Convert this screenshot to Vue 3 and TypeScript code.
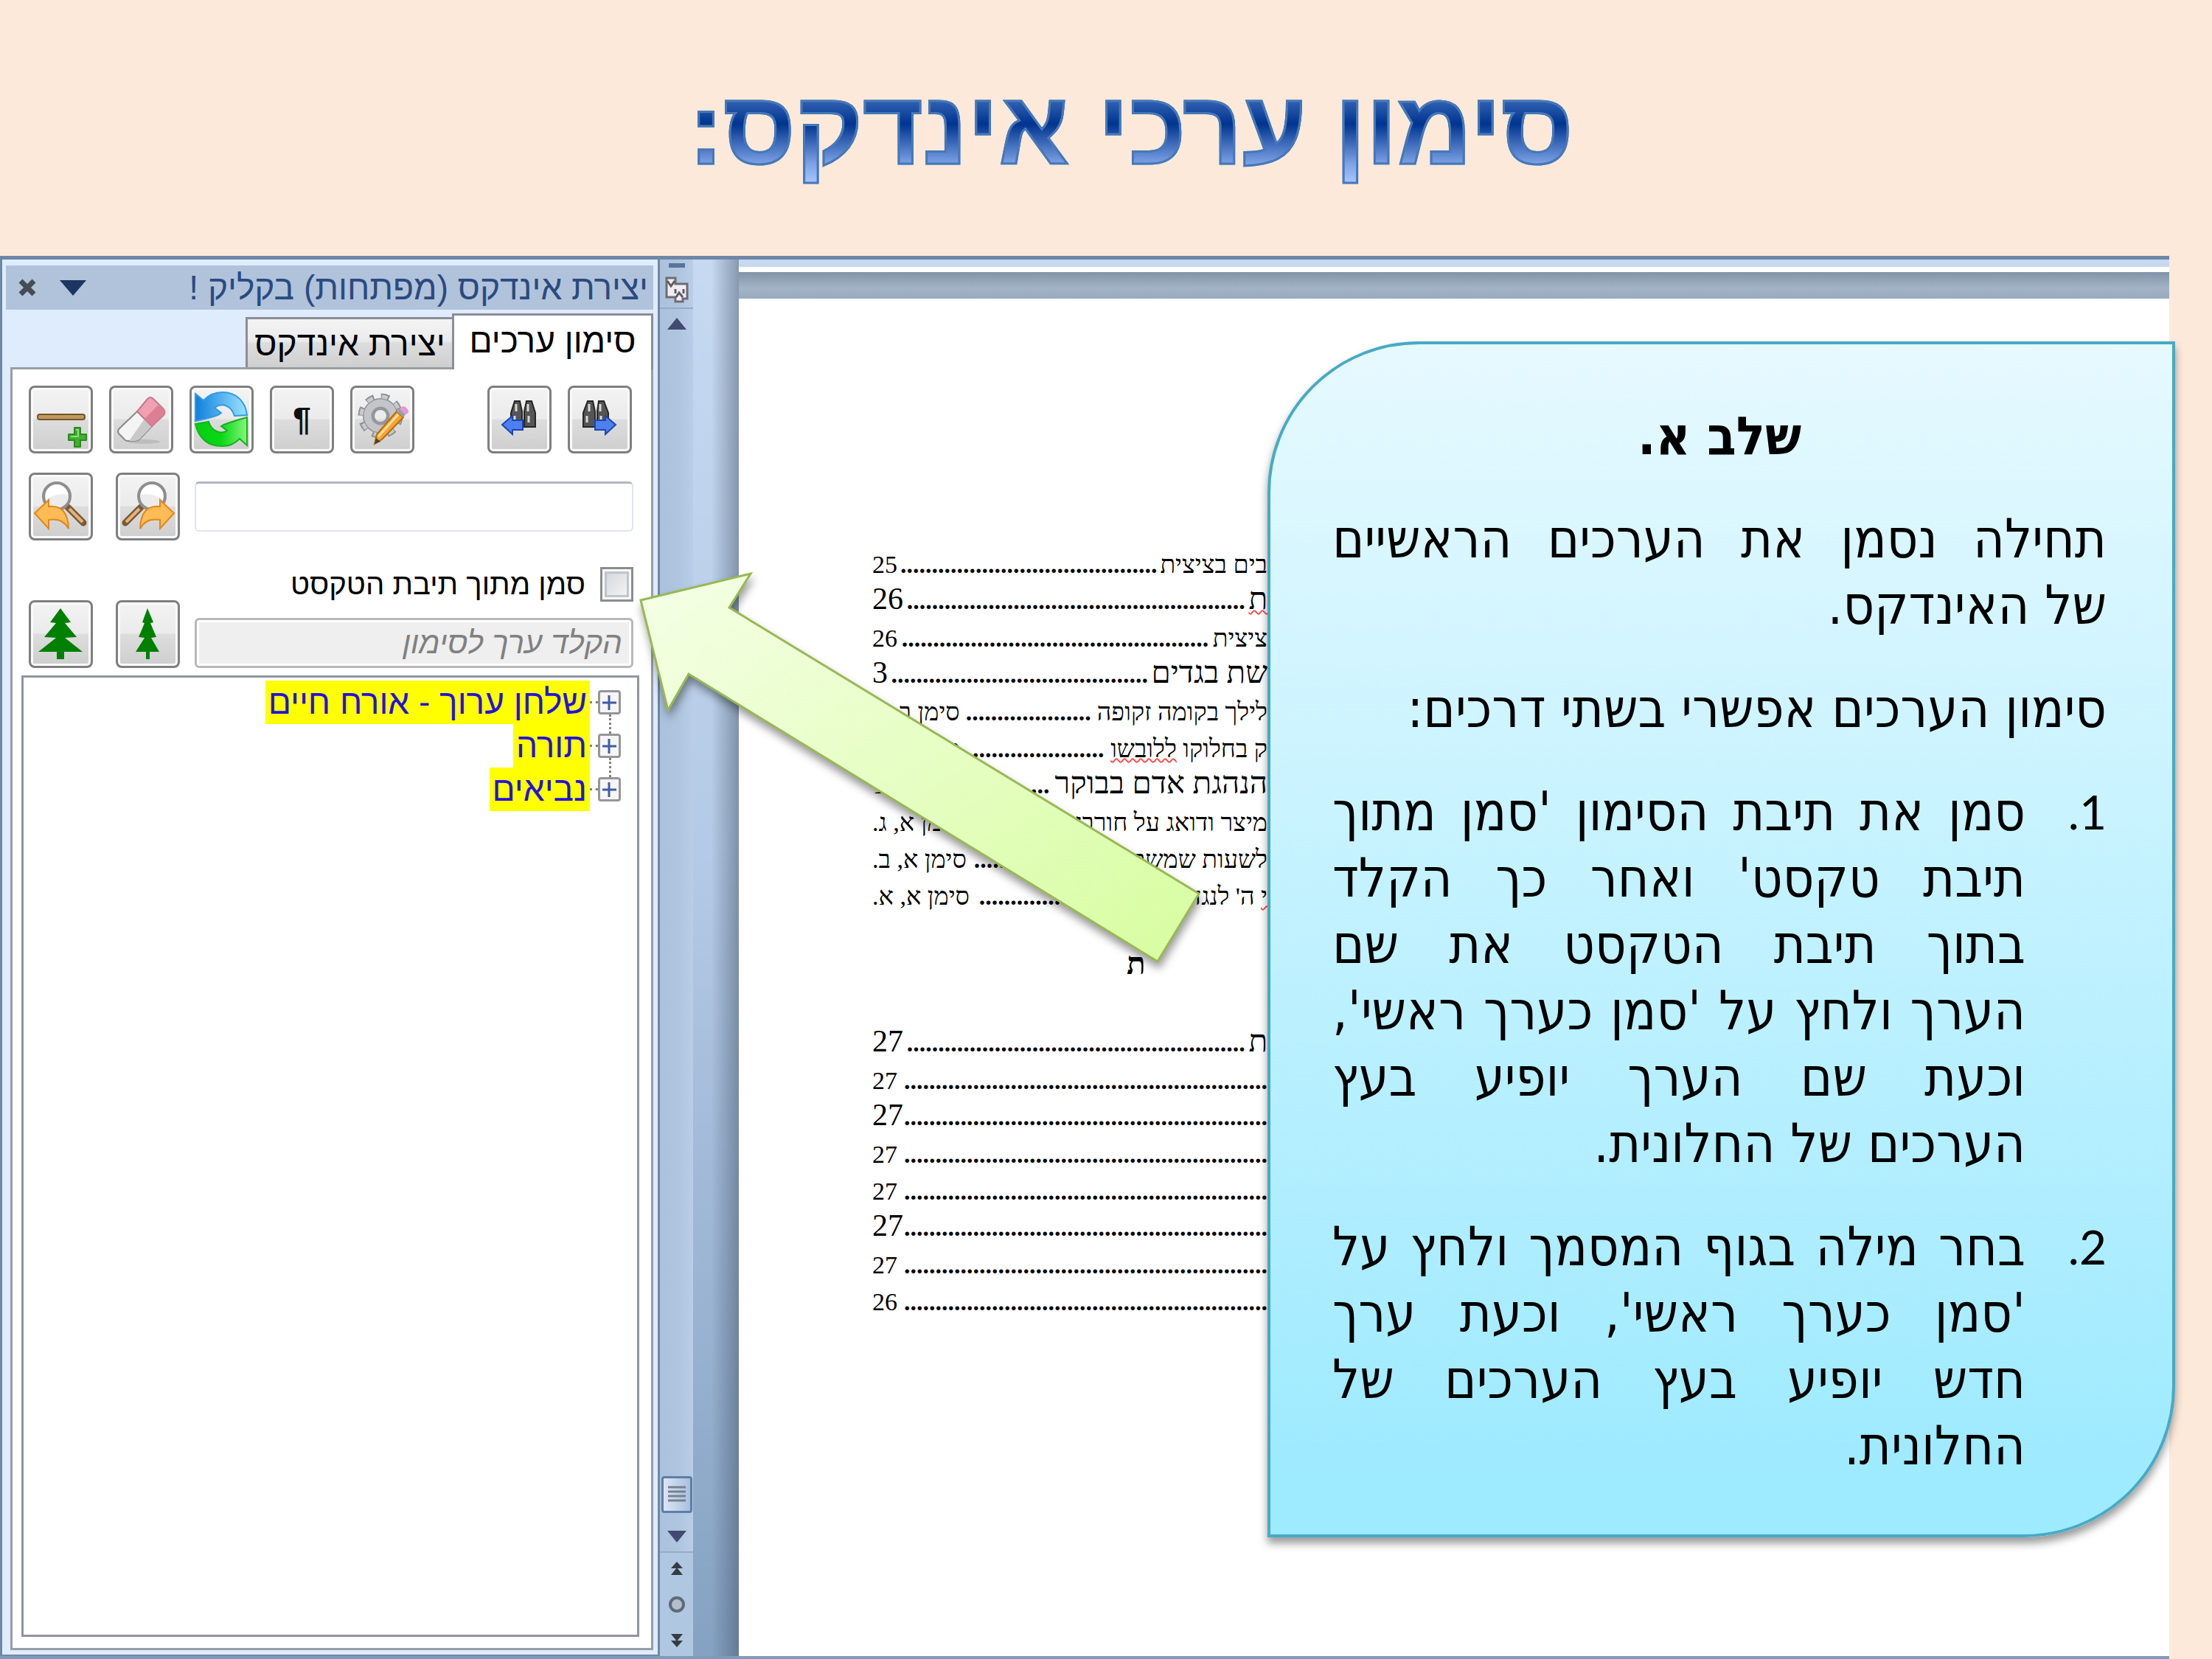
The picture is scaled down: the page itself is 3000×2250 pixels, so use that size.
<script setup lang="ts">
import { ref } from 'vue'

interface TocRow {
  page: string
  dots: number
  lead?: string
  text?: string
  misspelt?: string
  large?: boolean
}

const firstBlock: TocRow[] = [
  { page: '25', dots: 41, text: 'בים בציצית' },
  { page: '26', dots: 54, misspelt: 'ת', large: true },
  { page: '26', dots: 49, text: 'ציצית' },
  { page: '3', dots: 41, text: 'שת בגדים', large: true },
  { page: 'סימן ב, ג.', dots: 20, text: 'לילך בקומה זקופה' },
  { page: 'סימן ב, ג.', dots: 22, text: 'ק בחלוקו', misspelt: 'ללובשו' },
  { page: '1', dots: 25, text: 'הנהגת אדם בבוקר', large: true },
  { page: 'סימן א, ג.', dots: 15, text: 'מיצר ודואג על חורבן' },
  { page: 'סימן א, ב.', dots: 19, text: 'לשעות שמשתנות' },
  { page: 'סימן א, א.', dots: 31, lead: 'י', text: "ה' לנגדי" },
]

const secondBlock: TocRow[] = [
  { page: '27', dots: 54, text: 'ת', large: true },
  { page: '27', dots: 58 },
  { page: '27', dots: 58, large: true },
  { page: '27', dots: 58 },
  { page: '27', dots: 58 },
  { page: '27', dots: 58, large: true },
  { page: '27', dots: 58 },
  { page: '26', dots: 58 },
]

const blocks = [firstBlock, secondBlock]

const entries = ['שלחן ערוך - אורח חיים', 'תורה', 'נביאים']

const steps = [
  "סמן את תיבת הסימון 'סמן מתוך תיבת טקסט' ואחר כך הקלד בתוך תיבת הטקסט את שם הערך\u00a0ולחץ על 'סמן כערך ראשי', וכעת שם הערך יופיע בעץ הערכים של החלונית.",
  "בחר מילה בגוף המסמך ולחץ על 'סמן כערך ראשי', וכעת ערך חדש\u00a0יופיע בעץ הערכים של החלונית.",
]

const search = ref('')
const entryName = ref('')
const fromTextBox = ref(false)
</script>

<template>
  <div class="slide">
    <header class="heading">
      <h1 dir="rtl">סימון ערכי אינדקס:</h1>
    </header>

    <main class="window">
      <aside class="pane">
        <div class="pane-title">
          <button class="plain" type="button" aria-label="סגור">
            <svg width="24" height="24" viewBox="0 0 24 24"><path d="M3 3 21 21M21 3 3 21" stroke="#454c54" stroke-width="7" /></svg>
          </button>
          <button class="plain" type="button" aria-label="אפשרויות">
            <svg width="36" height="21" viewBox="0 0 36 21"><path d="M0 0H36L18 21Z" fill="#1b3660" /></svg>
          </button>
          <h2 dir="rtl">יצירת אינדקס (מפתחות) בקליק !</h2>
        </div>

        <div class="tabs" role="tablist">
          <button class="tab" type="button" role="tab">יצירת אינדקס</button>
          <button class="tab active" type="button" role="tab">סימון ערכים</button>
        </div>

        <section class="panel">
          <div class="toolbar">
            <button class="tool" type="button" aria-label="הוסף">
              <svg viewBox="0 0 81 86">
                <rect x="9" y="36" width="64" height="7" rx="3" fill="#c09a5c" stroke="#76552a" stroke-width="2" />
                <path d="M59 54h8v9h8v8h-8v9h-8v-9h-8v-8h8z" fill="#43b02f" stroke="#2b8a20" stroke-width="2" stroke-linejoin="round" />
                <path d="M61 57h3v9h-10" fill="none" stroke="#8fdc7c" stroke-width="2" />
              </svg>
            </button>
            <button class="tool" type="button" aria-label="מחק">
              <svg viewBox="0 0 81 86">
                <ellipse cx="44" cy="73" rx="22" ry="3" fill="#bcbcbc" />
                <path d="M35 32 55 52 39 69Q36 72 32 72H22Q19 72 17 69L10 62Q8 59 10 56Z" fill="#f4f4f4" stroke="#8b8b8b" stroke-width="2" />
                <path d="M45 42 55 52 39 69Q36 72 32 72H24Z" fill="#c9c9c9" />
                <path d="M35 32 49 15Q53 11 57 15L71 29Q74 33 71 37L55 52Z" fill="#efa0b2" stroke="#c9798c" stroke-width="2" />
                <path d="M45 42 64 23 71 30Q73 34 70 37L55 52Z" fill="#dd7f93" />
              </svg>
            </button>
            <button class="tool" type="button" aria-label="רענן">
              <svg viewBox="0 0 81 86">
                <defs>
                  <linearGradient id="blueArc" x1="0" x2="1"><stop offset="0" stop-color="#0f7fdc" /><stop offset="1" stop-color="#9be4ff" /></linearGradient>
                  <linearGradient id="greenArc" x1="0" x2="1"><stop offset="0" stop-color="#05cf12" /><stop offset="0.5" stop-color="#0ad716" /><stop offset="1" stop-color="#86f57c" /></linearGradient>
                </defs>
                <path d="M5 8 16 17Q26 6 42 6C60 6 73 18 75 37L58 38C54 25 42 19 31 27L40 34Q35 39 5 45Z" fill="url(#blueArc)" stroke="#2f9ae6" stroke-width="2" />
                <path d="M75 78 65 69Q54 80 40 79C22 79 9 68 5 49L23 46C27 58 38 64 48 58L40 52Q46 48 75 40Z" fill="url(#greenArc)" stroke="#13b31a" stroke-width="2" />
              </svg>
            </button>
            <button class="tool pilcrow" type="button">¶</button>
            <button class="tool" type="button" aria-label="הגדרות">
              <svg viewBox="0 0 81 86">
                <circle cx="38" cy="38" r="26" fill="none" stroke="#8d9095" stroke-width="9" stroke-dasharray="11 9.4" />
                <circle cx="38" cy="38" r="16" fill="none" stroke="#8d9095" stroke-width="16" />
                <circle cx="38" cy="38" r="26" fill="none" stroke="#c8cacd" stroke-width="5" stroke-dasharray="8 12.4" stroke-dashoffset="-1" />
                <circle cx="38" cy="38" r="16" fill="none" stroke="#c3c5c8" stroke-width="13" />
                <circle cx="38" cy="38" r="11" fill="none" stroke="#93969a" stroke-width="3" />
                <path d="M60 32 69 40 40 70 30 76 33 63Z" fill="#f7a52d" stroke="#b56c12" stroke-width="2" />
                <path d="M62 36 35 66" stroke="#ffe0a0" stroke-width="3" />
                <path d="M30 76 32 68 38 73Z" fill="#4a4036" />
                <path d="M60 32 64 28 72 36 69 40Z" fill="#9aa0a8" />
                <path d="M64 28Q69 22 74 28T72 36Z" fill="#e796cf" />
              </svg>
            </button>
            <span class="spacer"></span>
            <button class="tool" type="button" aria-label="הקודם">
              <svg viewBox="0 0 81 86">
                <path d="M34 18h7l3 14v21H29V34zM50 18h7l5 16v19H47V32z" fill="#555" stroke="#262626" stroke-width="2" />
                <path d="M36 22v10M52 22v10M34 38v9M53 38v9" stroke="#d8d8d8" stroke-width="3" />
                <path d="M17 50 31 38v6h14v13H31v6z" fill="#4d80ee" stroke="#1d46b0" stroke-width="2" />
              </svg>
            </button>
            <button class="tool" type="button" aria-label="הבא">
              <svg viewBox="0 0 81 86">
                <path d="M24 18h7l3 14v21H18V34zM39 18h7l6 16v19H37V32z" fill="#555" stroke="#262626" stroke-width="2" />
                <path d="M26 22v10M41 22v10M23 38v9M42 38v9" stroke="#d8d8d8" stroke-width="3" />
                <path d="M62 50 48 38v6H34v13h14v6z" fill="#4d80ee" stroke="#1d46b0" stroke-width="2" />
              </svg>
            </button>
          </div>

          <div class="search">
            <button v-for="side in ['back', 'forward']" :key="side" class="tool" type="button" :aria-label="side === 'back' ? 'חפש אחורה' : 'חפש קדימה'">
              <svg viewBox="0 0 81 86">
                <g :transform="side === 'back' ? undefined : 'translate(81 0) scale(-1 1)'">
                  <path d="M50 44 71 65" stroke="#7b5a34" stroke-width="9" stroke-linecap="round" />
                  <path d="M52 46 70 64" stroke="#e3b27c" stroke-width="4" />
                  <circle cx="35" cy="29" r="18" fill="#ececec" stroke="#8e8e8e" stroke-width="4" />
                  <path d="M20 29A15 15 0 0 1 50 27Q34 24 20 34Z" fill="#fff" />
                  <path d="M5 52 24 34V43Q50 40 51 73Q43 58 24 61V73Z" fill="#ffbb55" stroke="#e2871d" stroke-width="2" />
                </g>
              </svg>
            </button>
            <input v-model="search" class="field" type="text" dir="rtl" aria-label="חיפוש" />
          </div>

          <div class="entry">
            <button class="tool" type="button" aria-label="סמן כערך ראשי">
              <svg viewBox="0 0 81 86"><path d="M40 8 54 27 46 28 62 47 46 48 70 67H45V77H35V67H10L34 48 18 47 34 28 26 27Z" fill="#008000" /></svg>
            </button>
            <button class="tool" type="button" aria-label="סמן כערך משני">
              <svg viewBox="0 0 81 86"><path d="M40 8 48 27 44 28 52 47 45 48 56 67H43V77H38V67H24L36 48 28 47 36 28 33 27Z" fill="#008000" /></svg>
            </button>
            <div class="entry-fields">
              <label class="check" dir="rtl">
                <input v-model="fromTextBox" type="checkbox" />
                <span>סמן מתוך תיבת הטקסט</span>
              </label>
              <input v-model="entryName" class="field disabled" type="text" dir="rtl" placeholder="הקלד ערך לסימון" aria-label="ערך לסימון" disabled />
            </div>
          </div>

          <ul class="tree" dir="rtl">
            <li v-for="entry in entries" :key="entry">
              <button class="expander" type="button" aria-label="הרחב">
                <svg width="25" height="26" viewBox="0 0 25 26"><path d="M12 3V23M3 13H22" stroke="#3f5ca8" stroke-width="3" /></svg>
              </button>
              <span class="branch"></span>
              <span class="mark">{{ entry }}</span>
            </li>
          </ul>
        </section>
      </aside>

      <div class="scrollbar">
        <span class="split"></span>
        <svg class="ruler" width="34" height="38" viewBox="0 0 34 38">
          <path d="M3 3h12v8h16v20H25v4H15v-6H3z" fill="#f4ecf2" stroke="#6c6c74" stroke-width="3" />
          <path d="M4 7 9 14 14 7M15 18v6M26 18v6M16 29 20 23 25 29" fill="none" stroke="#5c5c64" stroke-width="3" />
        </svg>
        <span class="rule"></span>
        <svg class="up" width="26" height="16" viewBox="0 0 26 16"><path d="M13 0 26 16H0Z" fill="#434a72" /></svg>
        <span class="spacer"></span>
        <span class="thumb">
          <svg width="24" height="24" viewBox="0 0 24 24"><path d="M0 2H24M0 8H24M0 14H24M0 20H24" stroke="#75828f" stroke-width="3" /></svg>
        </span>
        <svg class="down" width="26" height="16" viewBox="0 0 26 16"><path d="M0 0H26L13 16Z" fill="#434a72" /></svg>
        <span class="rule"></span>
        <span class="browse">
          <svg width="16" height="18" viewBox="0 0 16 18"><path d="M8 0 16 9H0ZM8 8 16 18H0Z" fill="#353c42" /></svg>
          <svg width="22" height="22" viewBox="0 0 22 22"><circle cx="11" cy="11" r="9" fill="#b4bfcd" stroke="#5e6b77" stroke-width="4" /></svg>
          <svg width="16" height="18" viewBox="0 0 16 18"><path d="M8 18 0 9H16ZM8 10 0 0H16Z" fill="#353c42" /></svg>
        </span>
      </div>

      <div class="gutter"></div>

      <div class="document">
        <div class="previous"></div>
        <article class="page">
          <template v-for="(block, b) in blocks" :key="b">
            <h3 v-if="b === 1" class="letter">ת</h3>
            <div v-for="(row, r) in block" :key="r" class="row" :class="{ large: row.large }">
              <span dir="rtl">{{ row.page }}</span>
              <span class="leader">{{ '.'.repeat(row.dots) }}</span>
              <span v-if="row.text || row.misspelt" dir="rtl"><span v-if="row.lead" class="misspelt">{{ row.lead }}</span> {{ row.text }} <span v-if="row.misspelt" class="misspelt">{{ row.misspelt }}</span></span>
            </div>
          </template>
        </article>
      </div>

      <svg class="arrow" width="790" height="560" viewBox="0 0 790 560">
        <defs>
          <linearGradient id="arrowFill" x1="0" y1="0" x2="1" y2="1">
            <stop offset="0" stop-color="#f5ffe6" />
            <stop offset="1" stop-color="#d7fda0" />
          </linearGradient>
        </defs>
        <path d="M10 46 159 10 130 56 767 444 711 536 75 146 47 195Z" fill="url(#arrowFill)" stroke="#98b954" stroke-width="3" />
      </svg>

      <section class="callout" dir="rtl">
        <h2>שלב א.</h2>
        <p>תחילה נסמן את הערכים הראשיים של&nbsp;האינדקס.</p>
        <p>סימון הערכים אפשרי בשתי דרכים:</p>
        <ol>
          <li v-for="(step, i) in steps" :key="i">
            <span class="number">{{ i + 1 }}.</span>
            <p>{{ step }}</p>
          </li>
        </ol>
      </section>
    </main>
  </div>
</template>

<style>
body {
  margin: 0;
  background: #fde9da;
}
</style>

<style scoped>
.slide {
  display: flex;
  flex-direction: column;
  min-height: 100vh;
  background: #fde9da;
  color: #000;
  font-family: "Liberation Sans", sans-serif;
}

h1,
h2,
h3,
p,
ol,
ul {
  margin: 0;
  padding: 0;
  list-style: none;
}

button,
input {
  margin: 0;
  padding: 0;
  box-sizing: border-box;
  font-family: inherit;
}

.spacer {
  flex: 1;
}

.heading {
  display: flex;
  align-items: center;
  justify-content: center;
  height: 347px;
  padding-left: 68px;
  box-sizing: border-box;
}

.heading h1 {
  font-size: 140px;
  line-height: 160px;
  color: transparent;
  background: linear-gradient(#3565b5 40px, #003490 74px, #7da2e6 128px, #a9c9ff 156px);
  background-clip: text;
  -webkit-background-clip: text;
  -webkit-text-stroke: 3px #4579b8;
}

.window {
  position: relative;
  display: flex;
  flex: 1;
  margin-right: 58px;
  box-sizing: border-box;
  border-top: 5px solid #6f87a6;
  border-bottom: 4px solid #7f9abf;
  background: #c6d9f1;
}

.pane {
  display: flex;
  flex-direction: column;
  width: 895px;
  box-sizing: border-box;
  padding: 8px 6px 6px 5px;
  border: solid #6f87a6;
  border-width: 0 3px 2px 3px;
  background: #dfecfd;
}

.pane-title {
  display: flex;
  align-items: center;
  gap: 32px;
  height: 60px;
  padding: 0 7px 0 17px;
  background: #b0c3db;
}

.pane-title h2 {
  flex: 1;
  font-size: 46px;
  font-weight: 400;
  line-height: 60px;
  color: #2c4a80;
}

.plain {
  display: flex;
  border: 0;
  background: none;
}

.tabs {
  display: flex;
  align-items: flex-end;
  justify-content: flex-end;
  height: 78px;
  padding-top: 4px;
  box-sizing: border-box;
}

.tab {
  width: 280px;
  height: 68px;
  border: 3px solid #8c8e96;
  border-bottom: 0;
  border-right: 0;
  background: linear-gradient(#f4f4f4, #ebebeb 45%, #dddddd 50%, #cfcfcf);
  color: #000;
  font-size: 46px;
  line-height: 52px;
  white-space: nowrap;
}

.tab.active {
  position: relative;
  width: 273px;
  height: 76px;
  margin-bottom: -3px;
  padding-bottom: 6px;
  border-right: 3px solid #8c8e96;
  background: #fff;
}

.panel {
  display: flex;
  flex: 1;
  flex-direction: column;
  margin-left: 6px;
  padding: 22px 24px 15px 22px;
  border: 3px solid #9a9da6;
  background: #fff;
}

.toolbar {
  display: flex;
  gap: 22px;
  padding-right: 2px;
}

.tool {
  display: block;
  flex: none;
  width: 87px;
  height: 92px;
  border: 3px solid #7f7f7f;
  border-radius: 8px;
  box-shadow: inset 0 0 0 3px #fafafa;
  background: linear-gradient(#f3f3f3, #ebebeb 49%, #dddddd 50%, #cecece);
  color: #111;
}

.tool svg {
  display: block;
  width: 100%;
  height: 100%;
}

.pilcrow {
  font-size: 44px;
  font-weight: 700;
  line-height: 80px;
}

.search {
  display: flex;
  align-items: center;
  margin-top: 26px;
}

.search .tool:first-child,
.entry .tool:first-child {
  margin-right: 31px;
}

.field {
  flex: 1;
  min-width: 0;
  height: 68px;
  margin-left: 20px;
  padding: 0 12px;
  border: 2px solid #dfe4ee;
  border-top: 3px solid #b4b6c0;
  border-radius: 6px;
  background: #fff;
  font-size: 42px;
}

.entry {
  display: flex;
  align-items: flex-end;
  margin-top: 36px;
}

.entry-fields {
  display: flex;
  flex: 1;
  flex-direction: column;
  min-width: 0;
}

.entry-fields .field {
  flex: none;
}

.field.disabled {
  border: 3px solid #b9b9b9;
  box-shadow: inset 0 0 0 3px #fff;
  background: #efefef;
}

.field.disabled::placeholder {
  color: #808080;
  font-style: italic;
  opacity: 1;
}

.check {
  display: flex;
  align-items: center;
  gap: 20px;
  height: 47px;
  margin-bottom: 22px;
  font-size: 40px;
  line-height: 47px;
  white-space: nowrap;
}

.check input {
  width: 45px;
  height: 47px;
  border: 3px solid #8c8c8c;
  box-shadow: inset 0 0 0 3px #fbfbfb, inset 0 0 0 6px #bfc5cc;
  background: linear-gradient(135deg, #cfd3d9, #f8f8f8);
  appearance: none;
}

.tree {
  flex: 1;
  margin: 10px -8px 0 -10px;
  padding: 4px 22px 0 0;
  border: 3px solid #8f949f;
}

.tree li {
  position: relative;
  display: flex;
  align-items: center;
  height: 59px;
}

.tree li + li::before {
  content: "";
  position: absolute;
  top: -13px;
  right: 13px;
  height: 26px;
  border-right: 3px dotted #808080;
}

.expander {
  display: flex;
  align-items: center;
  justify-content: center;
  width: 31px;
  height: 33px;
  border: 3px solid #969696;
  border-radius: 4px;
  background: #f6f6f6;
}

.branch {
  width: 11px;
  border-top: 3px dotted #808080;
}

.mark {
  padding: 0 4px;
  background: #ff0;
  color: #2412e0;
  font-size: 46px;
  line-height: 59px;
}

.scrollbar {
  display: flex;
  flex-direction: column;
  align-items: center;
  width: 45px;
  background: linear-gradient(90deg, #abc1dc, #b0c6df 60%, #bacde8);
}

.split {
  width: 22px;
  height: 6px;
  margin-top: 5px;
  background: #58749c;
}

.ruler {
  margin: 11px 0 5px;
}

.rule {
  width: 100%;
  height: 2px;
  background: #94aac6;
}

.up {
  margin-top: 12px;
}

.thumb {
  display: flex;
  align-items: center;
  justify-content: center;
  width: 36px;
  height: 44px;
  border: 3px solid #5f7ea6;
  border-radius: 4px;
  background: linear-gradient(90deg, #dbe7f6, #a9c0de);
}

.down {
  margin: 24px 0 12px;
}

.browse {
  display: flex;
  flex-direction: column;
  align-items: center;
  justify-content: space-between;
  width: 100%;
  height: 116px;
  padding: 12px 0;
  background: #b0c7e1;
}

.gutter {
  width: 62px;
  background: linear-gradient(90deg, transparent 40%, rgba(60, 75, 95, 0.45)), linear-gradient(#c6d9f1, #b5cae6 42%, #85a2c2);
}

.document {
  display: flex;
  flex: 1;
  flex-direction: column;
  min-width: 0;
  background: #c6d9f1;
}

.previous {
  height: 36px;
  margin-top: 10px;
  border-top: 7px solid #fff;
  background: linear-gradient(#8394a8, #a4b3c6 60%, #9aabc0);
}

.page {
  flex: 1;
  padding: 328px 0 0 181px;
  background: #fff;
  font-family: "Liberation Serif", serif;
}

.row {
  display: flex;
  flex-wrap: wrap;
  align-items: baseline;
  align-content: flex-end;
  justify-content: space-between;
  width: 536px;
  height: 50px;
  font-size: 34px;
  line-height: 34px;
  white-space: nowrap;
}

.row.large {
  font-size: 42px;
  line-height: 42px;
}

.leader {
  font-size: 34px;
  font-weight: 700;
  line-height: 34px;
}

.misspelt {
  text-decoration: underline wavy #f44 2px;
}

.letter {
  width: 536px;
  margin: 53px 0 55px;
  padding-left: 345px;
  box-sizing: border-box;
  font-size: 42px;
  line-height: 42px;
}

.arrow {
  position: absolute;
  top: 416px;
  left: 859px;
  filter: drop-shadow(2px 8px 6px rgba(0, 0, 0, 0.4));
}

.callout {
  position: absolute;
  top: 111px;
  right: -8px;
  width: 1231px;
  box-sizing: border-box;
  padding: 79px 89px 75px 84px;
  border: 4px solid #46aac5;
  border-radius: 205px 0 205px 0;
  background: linear-gradient(#e6f9ff, #9eeaff 95%);
  box-shadow: 0 8px 12px rgba(0, 0, 0, 0.4);
  font-family: "DejaVu Sans Condensed", "DejaVu Sans", sans-serif;
  font-size: 73px;
  line-height: 90px;
  text-align: justify;
}

.callout h2 {
  font-size: 72px;
  text-align: center;
}

.callout > p,
.callout li {
  margin-top: 50px;
}

.callout li {
  display: flex;
}

.callout li p {
  flex: 1;
}

.number {
  width: 110px;
  font-family: Lato, sans-serif;
  font-size: 64px;
}
</style>
